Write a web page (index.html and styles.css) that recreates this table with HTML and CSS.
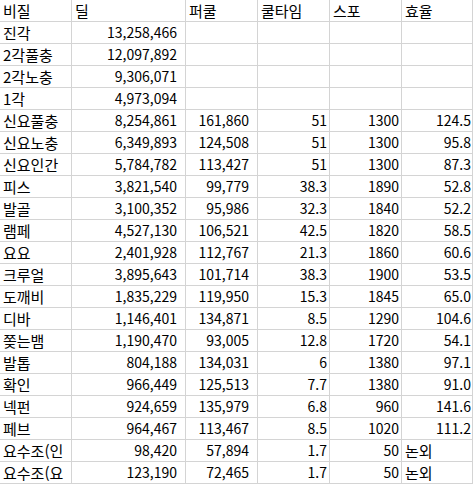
FILE: index.html
```html
<!DOCTYPE html>
<html lang="ko">
<head>
<meta charset="utf-8">
<link rel="stylesheet" href="styles.css">
</head>
<body>
<div class="sheet">
  <div class="c t">비질</div><div class="c t">딜</div><div class="c t">퍼쿨</div><div class="c t">쿨타임</div><div class="c t">스포</div><div class="c t">효율</div>
  <div class="c t">진각</div><div class="c n w">13,258,466</div><div class="c n w"></div><div class="c n"></div><div class="c n"></div><div class="c n e"></div>
  <div class="c t">2각풀충</div><div class="c n w">12,097,892</div><div class="c n w"></div><div class="c n"></div><div class="c n"></div><div class="c n e"></div>
  <div class="c t">2각노충</div><div class="c n w">9,306,071</div><div class="c n w"></div><div class="c n"></div><div class="c n"></div><div class="c n e"></div>
  <div class="c t">1각</div><div class="c n w">4,973,094</div><div class="c n w"></div><div class="c n"></div><div class="c n"></div><div class="c n e"></div>
  <div class="c t">신요풀충</div><div class="c n w">8,254,861</div><div class="c n w">161,860</div><div class="c n">51</div><div class="c n">1300</div><div class="c n e">124.5</div>
  <div class="c t">신요노충</div><div class="c n w">6,349,893</div><div class="c n w">124,508</div><div class="c n">51</div><div class="c n">1300</div><div class="c n e">95.8</div>
  <div class="c t">신요인간</div><div class="c n w">5,784,782</div><div class="c n w">113,427</div><div class="c n">51</div><div class="c n">1300</div><div class="c n e">87.3</div>
  <div class="c t">피스</div><div class="c n w">3,821,540</div><div class="c n w">99,779</div><div class="c n">38.3</div><div class="c n">1890</div><div class="c n e">52.8</div>
  <div class="c t">발골</div><div class="c n w">3,100,352</div><div class="c n w">95,986</div><div class="c n">32.3</div><div class="c n">1840</div><div class="c n e">52.2</div>
  <div class="c t">램페</div><div class="c n w">4,527,130</div><div class="c n w">106,521</div><div class="c n">42.5</div><div class="c n">1820</div><div class="c n e">58.5</div>
  <div class="c t">요요</div><div class="c n w">2,401,928</div><div class="c n w">112,767</div><div class="c n">21.3</div><div class="c n">1860</div><div class="c n e">60.6</div>
  <div class="c t">크루얼</div><div class="c n w">3,895,643</div><div class="c n w">101,714</div><div class="c n">38.3</div><div class="c n">1900</div><div class="c n e">53.5</div>
  <div class="c t">도깨비</div><div class="c n w">1,835,229</div><div class="c n w">119,950</div><div class="c n">15.3</div><div class="c n">1845</div><div class="c n e">65.0</div>
  <div class="c t">디바</div><div class="c n w">1,146,401</div><div class="c n w">134,871</div><div class="c n">8.5</div><div class="c n">1290</div><div class="c n e">104.6</div>
  <div class="c t">쫒는뱀</div><div class="c n w">1,190,470</div><div class="c n w">93,005</div><div class="c n">12.8</div><div class="c n">1720</div><div class="c n e">54.1</div>
  <div class="c t">발톱</div><div class="c n w">804,188</div><div class="c n w">134,031</div><div class="c n">6</div><div class="c n">1380</div><div class="c n e">97.1</div>
  <div class="c t">확인</div><div class="c n w">966,449</div><div class="c n w">125,513</div><div class="c n">7.7</div><div class="c n">1380</div><div class="c n e">91.0</div>
  <div class="c t">넥펀</div><div class="c n w">924,659</div><div class="c n w">135,979</div><div class="c n">6.8</div><div class="c n">960</div><div class="c n e">141.6</div>
  <div class="c t">페브</div><div class="c n w">964,467</div><div class="c n w">113,467</div><div class="c n">8.5</div><div class="c n">1020</div><div class="c n e">111.2</div>
  <div class="c t">요수조(인</div><div class="c n w">98,420</div><div class="c n w">57,894</div><div class="c n">1.7</div><div class="c n">50</div><div class="c t">논외</div>
  <div class="c t">요수조(요</div><div class="c n w">123,190</div><div class="c n w">72,465</div><div class="c n">1.7</div><div class="c n">50</div><div class="c t">논외</div>
</div>
</body>
</html>
```
FILE: styles.css
```css
html, body {
  margin: 0;
  padding: 0;
  background: #ffffff;
}
.sheet {
  display: grid;
  grid-template-columns: 72px 114px 72px 72px 72px 71px;
  grid-auto-rows: 22px;
  width: 473px;
  font-family: "Noto Sans CJK KR", "Noto Sans", sans-serif;
  font-size: 14px;
  color: #000000;
}
.c {
  border-right: 1px solid #d4d4d4;
  border-bottom: 1px solid #d4d4d4;
  line-height: 21px;
  white-space: nowrap;
  overflow: hidden;
}
.t {
  text-align: left;
  padding-left: 3px;
  font-size: 15px;
}
.n {
  text-align: right;
  padding-right: 2px;
}
.n.w {
  padding-right: 8px;
}
.n.e {
  padding-right: 1px;
}
```
